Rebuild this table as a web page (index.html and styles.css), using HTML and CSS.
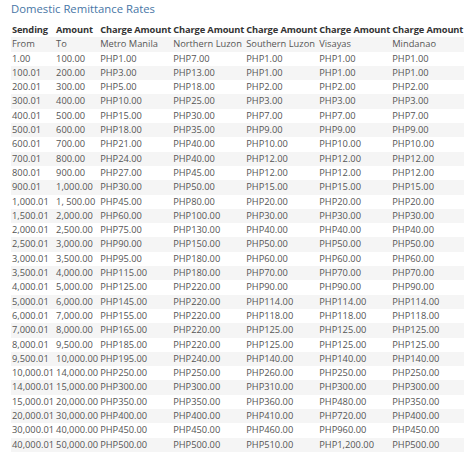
FILE: index.html
```html
<!DOCTYPE html>
<html lang="en">
<head>
<meta charset="utf-8">
<title>Domestic Remittance Rates</title>
<link rel="stylesheet" href="styles.css">
</head>
<body>
<div class="page">
  <h2 class="title">Domestic Remittance Rates</h2>
  <table class="rates">
    <thead>
      <tr class="head-main">
        <th>Sending</th><th>Amount</th><th>Charge Amount</th><th>Charge Amount</th><th>Charge Amount</th><th>Charge Amount</th><th>Charge Amount</th>
      </tr>
      <tr class="head-sub">
        <td>From</td><td>To</td><td>Metro Manila</td><td>Northern Luzon</td><td>Southern Luzon</td><td>Visayas</td><td>Mindanao</td>
      </tr>
    </thead>
    <tbody>
      <tr><td>1.00</td><td>100.00</td><td>PHP1.00</td><td>PHP7.00</td><td>PHP1.00</td><td>PHP1.00</td><td>PHP1.00</td></tr>
      <tr><td>100.01</td><td>200.00</td><td>PHP3.00</td><td>PHP13.00</td><td>PHP1.00</td><td>PHP1.00</td><td>PHP1.00</td></tr>
      <tr><td>200.01</td><td>300.00</td><td>PHP5.00</td><td>PHP18.00</td><td>PHP2.00</td><td>PHP2.00</td><td>PHP2.00</td></tr>
      <tr><td>300.01</td><td>400.00</td><td>PHP10.00</td><td>PHP25.00</td><td>PHP3.00</td><td>PHP3.00</td><td>PHP3.00</td></tr>
      <tr><td>400.01</td><td>500.00</td><td>PHP15.00</td><td>PHP30.00</td><td>PHP7.00</td><td>PHP7.00</td><td>PHP7.00</td></tr>
      <tr><td>500.01</td><td>600.00</td><td>PHP18.00</td><td>PHP35.00</td><td>PHP9.00</td><td>PHP9.00</td><td>PHP9.00</td></tr>
      <tr><td>600.01</td><td>700.00</td><td>PHP21.00</td><td>PHP40.00</td><td>PHP10.00</td><td>PHP10.00</td><td>PHP10.00</td></tr>
      <tr><td>700.01</td><td>800.00</td><td>PHP24.00</td><td>PHP40.00</td><td>PHP12.00</td><td>PHP12.00</td><td>PHP12.00</td></tr>
      <tr><td>800.01</td><td>900.00</td><td>PHP27.00</td><td>PHP45.00</td><td>PHP12.00</td><td>PHP12.00</td><td>PHP12.00</td></tr>
      <tr><td>900.01</td><td>1,000.00</td><td>PHP30.00</td><td>PHP50.00</td><td>PHP15.00</td><td>PHP15.00</td><td>PHP15.00</td></tr>
      <tr><td>1,000.01</td><td>1, 500.00</td><td>PHP45.00</td><td>PHP80.00</td><td>PHP20.00</td><td>PHP20.00</td><td>PHP20.00</td></tr>
      <tr><td>1,500.01</td><td>2,000.00</td><td>PHP60.00</td><td>PHP100.00</td><td>PHP30.00</td><td>PHP30.00</td><td>PHP30.00</td></tr>
      <tr><td>2,000.01</td><td>2,500.00</td><td>PHP75.00</td><td>PHP130.00</td><td>PHP40.00</td><td>PHP40.00</td><td>PHP40.00</td></tr>
      <tr><td>2,500.01</td><td>3,000.00</td><td>PHP90.00</td><td>PHP150.00</td><td>PHP50.00</td><td>PHP50.00</td><td>PHP50.00</td></tr>
      <tr><td>3,000.01</td><td>3,500.00</td><td>PHP95.00</td><td>PHP180.00</td><td>PHP60.00</td><td>PHP60.00</td><td>PHP60.00</td></tr>
      <tr><td>3,500.01</td><td>4,000.00</td><td>PHP115.00</td><td>PHP180.00</td><td>PHP70.00</td><td>PHP70.00</td><td>PHP70.00</td></tr>
      <tr><td>4,000.01</td><td>5,000.00</td><td>PHP125.00</td><td>PHP220.00</td><td>PHP90.00</td><td>PHP90.00</td><td>PHP90.00</td></tr>
      <tr><td>5,000.01</td><td>6,000.00</td><td>PHP145.00</td><td>PHP220.00</td><td>PHP114.00</td><td>PHP114.00</td><td>PHP114.00</td></tr>
      <tr><td>6,000.01</td><td>7,000.00</td><td>PHP155.00</td><td>PHP220.00</td><td>PHP118.00</td><td>PHP118.00</td><td>PHP118.00</td></tr>
      <tr><td>7,000.01</td><td>8,000.00</td><td>PHP165.00</td><td>PHP220.00</td><td>PHP125.00</td><td>PHP125.00</td><td>PHP125.00</td></tr>
      <tr><td>8,000.01</td><td>9,500.00</td><td>PHP185.00</td><td>PHP220.00</td><td>PHP125.00</td><td>PHP125.00</td><td>PHP125.00</td></tr>
      <tr><td>9,500.01</td><td>10,000.00</td><td>PHP195.00</td><td>PHP240.00</td><td>PHP140.00</td><td>PHP140.00</td><td>PHP140.00</td></tr>
      <tr><td>10,000.01</td><td>14,000.00</td><td>PHP250.00</td><td>PHP250.00</td><td>PHP260.00</td><td>PHP250.00</td><td>PHP250.00</td></tr>
      <tr><td>14,000.01</td><td>15,000.00</td><td>PHP300.00</td><td>PHP300.00</td><td>PHP310.00</td><td>PHP300.00</td><td>PHP300.00</td></tr>
      <tr><td>15,000.01</td><td>20,000.00</td><td>PHP350.00</td><td>PHP350.00</td><td>PHP360.00</td><td>PHP480.00</td><td>PHP350.00</td></tr>
      <tr><td>20,000.01</td><td>30,000.00</td><td>PHP400.00</td><td>PHP400.00</td><td>PHP410.00</td><td>PHP720.00</td><td>PHP400.00</td></tr>
      <tr><td>30,000.01</td><td>40,000.00</td><td>PHP450.00</td><td>PHP450.00</td><td>PHP460.00</td><td>PHP960.00</td><td>PHP450.00</td></tr>
      <tr><td>40,000.01</td><td>50,000.00</td><td>PHP500.00</td><td>PHP500.00</td><td>PHP510.00</td><td>PHP1,200.00</td><td>PHP500.00</td></tr>
    </tbody>
  </table>
</div>
</body>
</html>
```
FILE: styles.css
```css
html, body {
  margin: 0;
  padding: 0;
  background: #ffffff;
}

.page {
  padding: 0 10px 0 11px;
  font-family: "Open Sans", "Liberation Sans", sans-serif;
}

.title {
  margin: 0;
  padding-top: 1px;
  font-size: 11.3px;
  line-height: 16px;
  font-weight: 400;
  color: #4776a6;
}

.rates {
  margin-top: 6px;
  border-collapse: collapse;
  border-spacing: 0;
  font-size: 9.3px;
  color: #555555;
}

.rates th,
.rates td {
  padding: 0 1px;
  line-height: 14.3px;
  height: 14.3px;
  text-align: left;
  white-space: nowrap;
  vertical-align: middle;
}

.rates th {
  font-weight: 700;
  color: #333333;
  letter-spacing: -0.12px;
}

.rates .head-sub,
.rates tbody tr:nth-child(even) {
  background: #f5f5f5;
}
```
